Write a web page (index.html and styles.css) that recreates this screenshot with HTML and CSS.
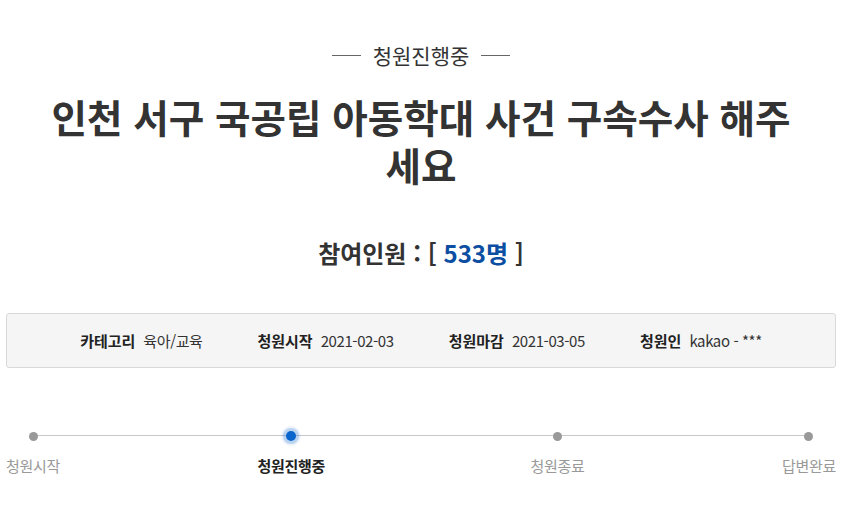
FILE: index.html
```html
<!DOCTYPE html>
<html lang="ko">
<head>
<meta charset="utf-8">
<title>청원진행중</title>
<link rel="stylesheet" href="styles.css">
</head>
<body>
<div class="page">
  <div class="status"><span class="status-line"></span><span class="status-text">청원진행중</span><span class="status-line"></span></div>
  <h1 class="title">인천 서구 국공립 아동학대 사건 구속수사 해주세요</h1>
  <div class="count">참여인원 : [ <span class="num">533명</span> ]</div>
  <div class="info">
    <div class="item"><span class="label">카테고리</span><span class="value">육아/교육</span></div>
    <div class="item"><span class="label">청원시작</span><span class="value">2021-02-03</span></div>
    <div class="item"><span class="label">청원마감</span><span class="value">2021-03-05</span></div>
    <div class="item"><span class="label">청원인</span><span class="value">kakao - ***</span></div>
  </div>
  <div class="progress">
    <div class="step"><span class="dot"></span><span class="step-label">청원시작</span></div>
    <div class="step active"><span class="dot"></span><span class="step-label">청원진행중</span></div>
    <div class="step"><span class="dot"></span><span class="step-label">청원종료</span></div>
    <div class="step"><span class="dot"></span><span class="step-label">답변완료</span></div>
  </div>
</div>
</body>
</html>
```
FILE: styles.css
```css
* { box-sizing: border-box; }
html, body { margin: 0; padding: 0; background: #fff; }
body {
  font-family: "Noto Sans CJK KR", "Noto Sans", sans-serif;
  color: #333;
}
.page {
  width: 830px;
  margin-left: 6px;
  padding-top: 41px;
}
.status {
  display: flex;
  justify-content: center;
  align-items: center;
  gap: 12px;
  height: 28px;
}
.status-line {
  width: 29px;
  height: 1px;
  background: #666;
}
.status-text {
  font-size: 21px;
  line-height: 28px;
  color: #333;
}
.title {
  margin: 23px auto 0;
  width: 760px;
  font-size: 38.6px;
  line-height: 48px;
  font-weight: 700;
  text-align: center;
  color: #333;
}
.count {
  margin-top: 49px;
  text-align: center;
  font-size: 24px;
  line-height: 32px;
  font-weight: 700;
  color: #333;
}
.count .num { color: #0b4ea2; }
.info {
  margin-top: 44px;
  height: 55px;
  border: 1px solid #d9d9d9;
  border-radius: 3px;
  background: #f5f5f5;
  display: flex;
  justify-content: center;
  align-items: center;
  gap: 55px;
  font-size: 15px;
}
.item { display: flex; align-items: center; gap: 8px; }
.label { font-weight: 700; color: #222; }
.value { color: #333; letter-spacing: -0.4px; }
.progress {
  position: relative;
  margin-top: 60px;
  display: flex;
  justify-content: space-between;
}
.progress::before {
  content: "";
  position: absolute;
  left: 27px;
  right: 28px;
  top: 7px;
  height: 1px;
  background: #c8c8c8;
}
.step {
  position: relative;
  display: flex;
  flex-direction: column;
  align-items: center;
}
.step.active { margin-right: 8px; }
.dot {
  width: 9px;
  height: 9px;
  margin: 3.5px 0;
  border-radius: 50%;
  background: #999;
}
.step.active .dot {
  width: 10px;
  height: 10px;
  margin: 3px 0;
  background: #0a66cc;
  box-shadow: 0 0 0 3px rgba(10, 102, 204, 0.22), 0 0 0 5px rgba(10, 102, 204, 0.08);
}
.step-label {
  margin-top: 12px;
  font-size: 15px;
  line-height: 20px;
  color: #999;
  letter-spacing: -0.3px;
}
.step.active .step-label {
  color: #222;
  font-weight: 700;
}
```
